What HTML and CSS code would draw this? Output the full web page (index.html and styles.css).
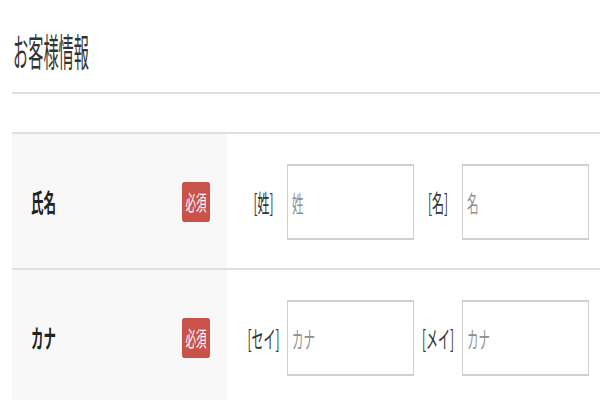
FILE: index.html
```html
<!DOCTYPE html>
<html lang="ja">
<head>
<meta charset="utf-8">
<title>お客様情報</title>
<link rel="stylesheet" href="styles.css">
</head>
<body>
<div class="page">
  <h2 class="title"><span class="title-text">お客様情報</span></h2>
  <div class="form-table">
    <div class="row">
      <div class="head">
        <span class="head-label">氏名</span>
        <span class="badge">必須</span>
      </div>
      <div class="body">
        <span class="field-label">[姓]</span>
        <input class="field" type="text" placeholder="姓">
        <span class="field-label wide">[名]</span>
        <input class="field" type="text" placeholder="名">
      </div>
    </div>
    <div class="row">
      <div class="head">
        <span class="head-label">カナ</span>
        <span class="badge">必須</span>
      </div>
      <div class="body">
        <span class="field-label">[セイ]</span>
        <input class="field" type="text" placeholder="カナ">
        <span class="field-label wide">[メイ]</span>
        <input class="field" type="text" placeholder="カナ">
      </div>
    </div>
  </div>
</div>
</body>
</html>
```

FILE: styles.css
```css
html {
  background: #fff;
}
body {
  margin: 0;
  padding: 0;
  height: 400px;
  font-family: "Noto Sans CJK JP", "Noto Sans", sans-serif;
  color: #333;
}
.page {
  width: 588px;
  height: 200px;
  overflow: hidden;
  padding-left: 12px;
  transform: scaleY(2);
  transform-origin: 0 0;
}
.title {
  margin: 0;
  padding-top: 13px;
  padding-bottom: 9px;
  font-size: 19px;
  line-height: 24px;
  font-weight: 400;
  color: #333;
  border-bottom: 1px solid #e0e0e0;
}
.title-text {
  display: inline-block;
  margin-left: 1px;
  transform: scaleX(0.8);
  transform-origin: 0 0;
}
.form-table {
  margin-top: 19px;
  border-top: 1px solid #e0e0e0;
}
.row {
  display: flex;
  height: 67px;
  border-bottom: 1px solid #e0e0e0;
}
.head {
  width: 215px;
  flex: none;
  box-sizing: border-box;
  background: #f8f8f8;
  padding: 0 17px 0 19px;
  display: flex;
  align-items: center;
  justify-content: space-between;
}
.head-label {
  font-size: 12.5px;
  font-weight: 700;
  color: #222;
}
.badge {
  background: #c9524a;
  color: #fff;
  font-size: 10.5px;
  line-height: 20px;
  padding: 0 3.5px;
  border-radius: 2px;
}
.body {
  flex: 1;
  display: flex;
  align-items: center;
  padding-left: 13px;
}
.field-label {
  width: 47px;
  flex: none;
  text-align: center;
  font-size: 12px;
  color: #333;
}
.field-label.wide {
  width: 48px;
}
.field {
  width: 127px;
  height: 38px;
  box-sizing: border-box;
  border: 1px solid #cfcfcf;
  padding: 0 0 0 4px;
  margin: 0;
  font-family: "Noto Sans CJK JP", "Noto Sans", sans-serif;
  font-size: 11.5px;
  color: #333;
  background: #fff;
  outline: none;
}
.field::placeholder {
  color: #8f8f8f;
}
```
